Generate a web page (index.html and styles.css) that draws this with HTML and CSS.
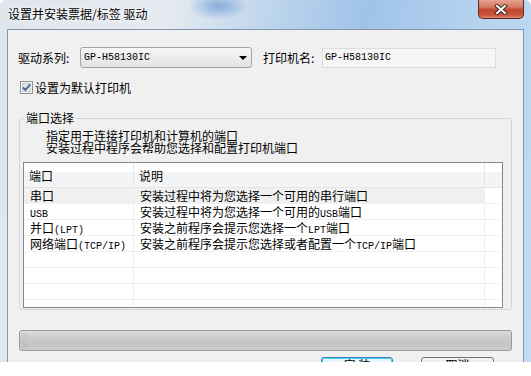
FILE: index.html
```html
<!DOCTYPE html>
<html lang="zh-CN">
<head>
  <meta charset="UTF-8">
  <title>设置并安装票据/标签 驱动</title>
  <link rel="stylesheet" href="styles.css">
</head>
<body>
<div class="window">
  <div class="titlebar">
    <span class="title">设置并安装票据/标签 驱动</span>
    <div class="close-btn">
      <svg width="14" height="11" viewBox="0 0 14 11">
        <path d="M3 2 L11 9 M11 2 L3 9" stroke="#3b2a28" stroke-width="4" stroke-linecap="square"/>
        <path d="M3 2 L11 9 M11 2 L3 9" stroke="#ffffff" stroke-width="2" stroke-linecap="square"/>
      </svg>
    </div>
  </div>

  <div class="client">
    <div class="row-driver">
      <label class="field-label">驱动系列:</label>
      <div class="combo">
        <span class="mono">GP-H58130IC</span>
        <span class="combo-arrow"></span>
      </div>
      <label class="field-label name-label">打印机名:</label>
      <div class="textbox"><span class="mono">GP-H58130IC</span></div>
    </div>

    <div class="row-check">
      <span class="checkbox">
        <svg width="13" height="13" viewBox="0 0 13 13">
          <rect x="0.5" y="0.5" width="12" height="12" fill="#f4f4f4" stroke="#8e8f8f"/>
          <rect x="2.5" y="2.5" width="8" height="8" fill="#e2e6ea" stroke="#c4c9cf"/>
          <path d="M3 6.5 L5.5 9 L10 3.5" fill="none" stroke="#3f5a96" stroke-width="1.8"/>
        </svg>
      </span>
      <span>设置为默认打印机</span>
    </div>

    <fieldset class="group">
      <legend>端口选择</legend>
      <p class="hint">指定用于连接打印机和计算机的端口<br>安装过程中程序会帮助您选择和配置打印机端口</p>
      <div class="list">
        <div class="list-head">
          <div class="cell">端口</div>
          <div class="cell">说明</div>
          <div class="cell"></div>
        </div>
        <div class="list-row hot">
          <div class="cell">串口</div>
          <div class="cell">安装过程中将为您选择一个可用的串行端口</div>
          <div class="cell"></div>
        </div>
        <div class="list-row">
          <div class="cell"><span class="mono">USB</span></div>
          <div class="cell">安装过程中将为您选择一个可用的<span class="mono">USB</span>端口</div>
          <div class="cell"></div>
        </div>
        <div class="list-row">
          <div class="cell">并口<span class="mono">(LPT)</span></div>
          <div class="cell">安装之前程序会提示您选择一个<span class="mono">LPT</span>端口</div>
          <div class="cell"></div>
        </div>
        <div class="list-row">
          <div class="cell">网络端口<span class="mono">(TCP/IP)</span></div>
          <div class="cell">安装之前程序会提示您选择或者配置一个<span class="mono">TCP/IP</span>端口</div>
          <div class="cell"></div>
        </div>
        <div class="list-row"><div class="cell"></div><div class="cell"></div><div class="cell"></div></div>
        <div class="list-row"><div class="cell"></div><div class="cell"></div><div class="cell"></div></div>
        <div class="list-row"><div class="cell"></div><div class="cell"></div><div class="cell"></div></div>
        <div class="list-row"><div class="cell"></div><div class="cell"></div><div class="cell"></div></div>
      </div>
    </fieldset>

    <div class="progress"><div class="progress-fill"></div></div>

    <div class="buttons">
      <button class="btn default">安 装</button>
      <button class="btn">取消</button>
    </div>
  </div>
</div>
</body>
</html>
```

FILE: styles.css
```css
body {
  margin: 0;
  background-color: #ffffff;
  font-family: "Noto Sans CJK SC", sans-serif;
  font-size: 12px;
  color: #000000;
}
.window {
  width: 531px;
  height: 362px;
  overflow: hidden;
  box-sizing: border-box;
  padding: 0 7px;
  border-radius: 6px 6px 0 0;
  background:
    radial-gradient(ellipse 30px 14px at 218px 6px, rgba(70, 130, 200, 0.55), rgba(70, 130, 200, 0)),
    linear-gradient(100deg, #dfe5ec 0%, #e6ebf1 28%, #b9d2ec 48%, #9fc3e8 62%, #b5d2ef 80%, #c4dcf2 100%);
  display: flex;
  flex-direction: column;
}
.titlebar {
  height: 29px;
  flex-shrink: 0;
  display: flex;
  justify-content: space-between;
  align-items: flex-start;
}
.title {
  padding: 6px 0 0 1px;
  line-height: 16px;
  text-shadow: 0 0 6px #ffffff, 0 0 3px #ffffff;
}
.close-btn {
  width: 46px;
  height: 19px;
  box-sizing: border-box;
  border: 1px solid #5e2a22;
  border-top: none;
  border-radius: 0 0 5px 5px;
  background: linear-gradient(#e7a493 0%, #d47a63 40%, #c0442b 55%, #cc5638 85%, #de8a70 100%);
  display: flex;
  justify-content: center;
  align-items: center;
}
.client {
  flex: 1;
  background-color: #f0f0f0;
  border: 1px solid #8396ad;
  border-bottom: none;
  display: flex;
  flex-direction: column;
}
.row-driver {
  display: flex;
  align-items: center;
  padding: 17px 0 0 10px;
  height: 21px;
}
.field-label {
  width: 62px;
  flex-shrink: 0;
}
.name-label {
  width: 59px;
  margin-left: 11px;
}
.mono {
  font-family: "Liberation Mono", monospace;
  font-size: 10px;
}
.combo {
  width: 172px;
  height: 21px;
  box-sizing: border-box;
  border: 1px solid #a3a3a3;
  border-radius: 3px;
  background: linear-gradient(#f7f7f7, #ececec 50%, #e3e3e3);
  display: flex;
  align-items: center;
  justify-content: space-between;
  padding: 0 4px 0 3px;
}
.combo-arrow {
  width: 0;
  height: 0;
  border-left: 4px solid transparent;
  border-right: 4px solid transparent;
  border-top: 4px solid #000000;
}
.textbox {
  width: 174px;
  height: 20px;
  box-sizing: border-box;
  border: 1px solid #d9dde2;
  background-color: #f5f5f5;
  display: flex;
  align-items: center;
  padding-left: 2px;
}
.row-check {
  display: flex;
  align-items: center;
  gap: 2px;
  margin-top: 12px;
  padding-left: 12px;
  height: 15px;
}
.checkbox {
  display: flex;
}
.group {
  margin: 16px 0 0 11px;
  width: 493px;
  box-sizing: border-box;
  padding: 0 8px 1px 3px;
  border: 1px solid #d5d5d5;
  border-radius: 3px;
  min-width: 0;
}
.group legend {
  padding: 0 2px;
  margin-left: 1px;
  line-height: 14px;
}
.hint {
  margin: 5px 0 8px 23px;
  line-height: 12px;
}
.list {
  height: 146px;
  box-sizing: border-box;
  border: 1px solid #828790;
  background-color: #ffffff;
  overflow: hidden;
}
.list-head,
.list-row {
  display: grid;
  grid-template-columns: 110px 351px 1fr;
}
.list-head {
  height: 25px;
  box-sizing: border-box;
  border-bottom: 1px solid #e5e5e5;
  background: linear-gradient(#ffffff 0, #ffffff 38%, #f3f4f6 38%, #f3f4f6 100%);
}
.list-head .cell {
  display: flex;
  align-items: center;
  padding-left: 5px;
  border-right: 1px solid #e2e5ea;
}
.list-row {
  height: 16px;
  box-sizing: border-box;
  border-bottom: 1px solid #f0f0f0;
}
.list-row .cell {
  padding-left: 6px;
  line-height: 15px;
  white-space: nowrap;
  border-right: 1px solid #f0f0f0;
}
.list-row .cell:last-child,
.list-head .cell:last-child {
  border-right: none;
}
.list-row.hot .cell:not(:last-child) {
  background-color: #f0f0f0;
}
.progress {
  margin: 20px 0 0 11px;
  width: 493px;
  height: 21px;
  box-sizing: border-box;
  border: 1px solid #9a9a9a;
  border-radius: 3px;
  background: linear-gradient(#dcdcdc, #c9c9c9 40%, #c4c4c4 70%, #cdcdcd);
  padding: 2px;
}
.progress-fill {
  width: 6px;
  height: 100%;
  background: linear-gradient(#cfcfcf, #bdbdbd);
}
.buttons {
  display: flex;
  justify-content: flex-end;
  gap: 28px;
  margin-top: 6px;
  padding-right: 29px;
}
.btn {
  width: 73px;
  height: 23px;
  box-sizing: border-box;
  border: 1px solid #707070;
  border-radius: 3px;
  background: linear-gradient(#f2f2f2, #ebebeb 50%, #dddddd 50%, #cfcfcf);
  font-family: "Noto Sans CJK SC", sans-serif;
  font-size: 12px;
  padding: 1px 0 0;
  line-height: 12px;
  display: flex;
  justify-content: center;
  align-items: flex-start;
}
.btn.default {
  width: 72px;
  border-color: #3c7fb1;
  box-shadow: inset 0 0 0 1px #48d4f8;
  background: linear-gradient(#eaf6fd, #d9f0fc 50%, #bee6fd 50%, #a7d9f5);
}
```
